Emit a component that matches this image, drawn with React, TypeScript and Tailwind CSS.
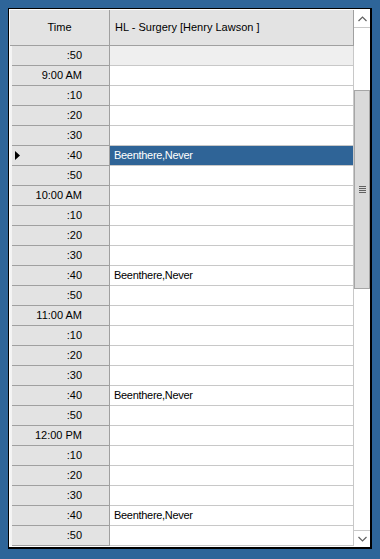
const rows = [
  ':50', '9:00 AM', ':10', ':20', ':30', ':40', ':50',
  '10:00 AM', ':10', ':20', ':30', ':40', ':50',
  '11:00 AM', ':10', ':20', ':30', ':40', ':50',
  '12:00 PM', ':10', ':20', ':30', ':40', ':50',
];

const SELECTED = 5;

function ScrollBar() {
  return (
    <div className="flex w-[16px] flex-col bg-white">
      <div className="flex h-[18px] items-center justify-center border-b border-[#c8c8c8]">
        <svg width="9" height="6" viewBox="0 0 9 6">
          <path d="M0.5 5 L4.5 1 L8.5 5" fill="none" stroke="#606060" strokeWidth="1.2" />
        </svg>
      </div>
      <div className="h-[62px]" />
      <div className="flex h-[199px] items-center justify-center border border-[#a6a6a6] bg-[#dadada]">
        <div className="flex w-[7px] flex-col gap-[1px]">
          <div className="h-[1px] bg-[#606060]" />
          <div className="h-[1px] bg-[#606060]" />
          <div className="h-[1px] bg-[#606060]" />
          <div className="h-[1px] bg-[#606060]" />
        </div>
      </div>
      <div className="flex-1" />
      <div className="flex h-[16px] items-center justify-center border-t border-[#c8c8c8]">
        <svg width="9" height="6" viewBox="0 0 9 6">
          <path d="M0.5 1 L4.5 5 L8.5 1" fill="none" stroke="#606060" strokeWidth="1.2" />
        </svg>
      </div>
    </div>
  );
}

export default function App() {
  return (
    <div
      className="h-[559px] w-[380px] bg-[#2e6599] pl-[8px] pt-[8px] text-[11px] text-black"
      style={{ fontFamily: '"Liberation Sans", Arial, sans-serif' }}
    >
      <div className="flex w-[364px] border-b-2 border-l border-r-2 border-t border-black bg-white p-[1px] pr-0 pb-[1px]">
        <div className="flex w-[344px] flex-col">
          {/* header */}
          <div className="flex h-[36px] border-b border-[#a0a0a0] bg-[#e3e3e3]">
            <div className="flex w-[100px] items-center justify-center border-r border-[#a0a0a0]">Time</div>
            <div className="flex flex-1 items-center border-r border-[#a0a0a0] pl-[5px]">
              HL - Surgery [Henry Lawson ]
            </div>
          </div>

          {rows.map((t, i) => {
            const booked = t === ':40';
            const selected = i === SELECTED;
            return (
              <div key={i} className="flex h-[20px]">
                <div className="flex w-[100px] border-r border-[#a0a0a0] bg-[#f4f4f4] pl-[2px]">
                  <div className="relative flex flex-1 items-center justify-end border-b border-[#a0a0a0] bg-[#e3e3e3] pr-[27px]">
                    {selected && (
                      <svg className="absolute left-[3px] top-[5px]" width="5" height="9" viewBox="0 0 5 9">
                        <path d="M0 0 L5 4.5 L0 9 Z" fill="#000" />
                      </svg>
                    )}
                    {t}
                  </div>
                </div>
                <div
                  className={
                    selected
                      ? 'flex flex-1 items-center border-b border-r border-[#c8c8c8] bg-[#2f6497] pl-[4px] tracking-[-0.3px] text-white'
                      : i === 0
                        ? 'flex flex-1 items-center border-b border-r border-[#c8c8c8] bg-[#efefef] pl-[4px] tracking-[-0.3px]'
                        : 'flex flex-1 items-center border-b border-r border-[#c8c8c8] bg-white pl-[4px] tracking-[-0.3px]'
                  }
                >
                  {booked ? 'Beenthere,Never' : ''}
                </div>
              </div>
            );
          })}
        </div>
        <ScrollBar />
      </div>
    </div>
  );
}
